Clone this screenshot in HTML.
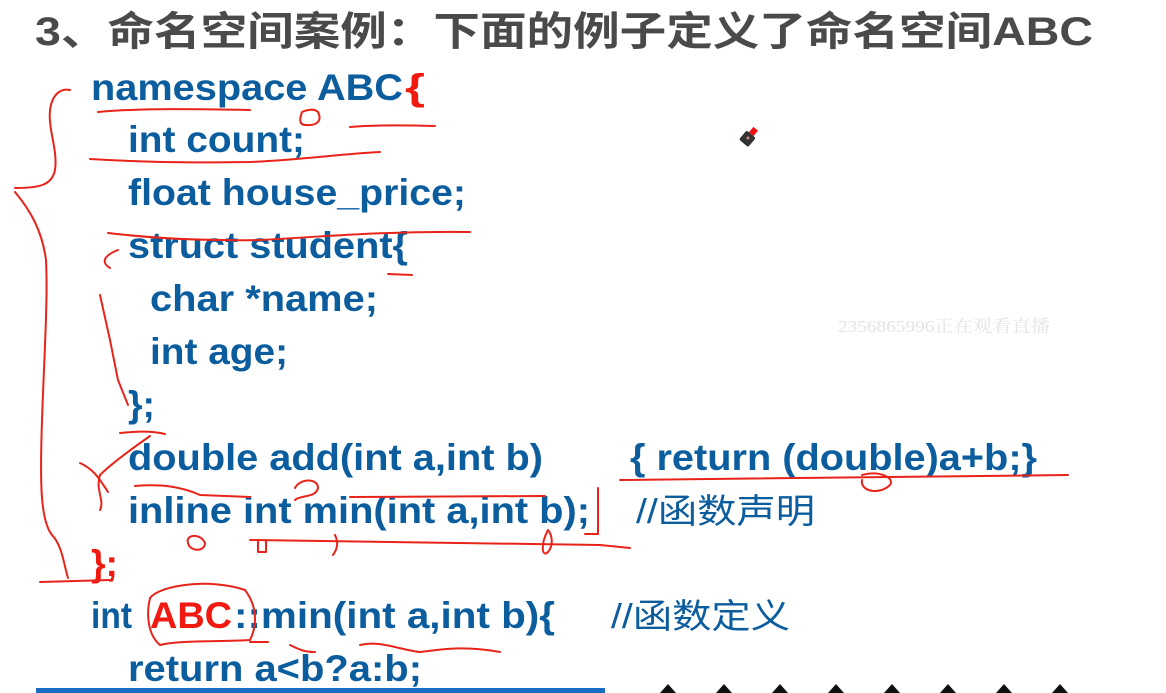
<!DOCTYPE html>
<html><head><meta charset="utf-8"><style>
html,body{margin:0;padding:0;background:#fff;width:1166px;height:693px;overflow:hidden}
svg{display:block}
.c{font-family:"Liberation Sans","Noto Sans CJK SC",sans-serif;font-weight:bold;font-size:37px;fill:#0b5d9e}
.r{fill:#f01a10}
.t{font-family:"Liberation Sans","Noto Sans CJK SC",sans-serif;font-weight:bold;font-size:40px;fill:#4a4a4a}
.cm{font-family:"Liberation Sans","Noto Sans CJK SC",sans-serif;font-size:34px;fill:#0b5d9e}
.a{fill:none;stroke:#e8231a;stroke-width:2;stroke-linecap:round;stroke-linejoin:round}
</style></head><body>
<svg width="1166" height="693" viewBox="0 0 1166 693">
<text class="t" x="35" y="45" textLength="1058" lengthAdjust="spacingAndGlyphs">3、命名空间案例：下面的例子定义了命名空间ABC</text>

<text class="c" x="91" y="100" textLength="312" lengthAdjust="spacingAndGlyphs">namespace ABC</text>
<text class="c r" x="405" y="100" textLength="20" lengthAdjust="spacingAndGlyphs">{</text>
<text class="c" x="128" y="152" textLength="177" lengthAdjust="spacingAndGlyphs">int count;</text>
<text class="c" x="128" y="205" textLength="338" lengthAdjust="spacingAndGlyphs">float house_price;</text>
<text class="c" x="128" y="258" textLength="280" lengthAdjust="spacingAndGlyphs">struct student{</text>
<text class="c" x="150" y="311" textLength="228" lengthAdjust="spacingAndGlyphs">char *name;</text>
<text class="c" x="150" y="364" textLength="138" lengthAdjust="spacingAndGlyphs">int age;</text>
<text class="c" x="128" y="417" textLength="27" lengthAdjust="spacingAndGlyphs">};</text>
<text class="c" x="128" y="470" textLength="415" lengthAdjust="spacingAndGlyphs">double add(int a,int b)</text>
<text class="c" x="630" y="470" textLength="407" lengthAdjust="spacingAndGlyphs">{ return (double)a+b;}</text>
<text class="c" x="128" y="523" textLength="462" lengthAdjust="spacingAndGlyphs">inline int min(int a,int b);</text>
<text class="cm" x="636" y="523" textLength="179" lengthAdjust="spacingAndGlyphs">//函数声明</text>
<text class="c r" x="91" y="576" textLength="27" lengthAdjust="spacingAndGlyphs">};</text>
<text class="c" x="91" y="628" textLength="41" lengthAdjust="spacingAndGlyphs">int</text>
<text class="c r" x="150" y="628" textLength="82" lengthAdjust="spacingAndGlyphs">ABC</text>
<text class="c" x="234" y="628" textLength="321" lengthAdjust="spacingAndGlyphs">::min(int a,int b){</text>
<text class="cm" x="611" y="628" textLength="179" lengthAdjust="spacingAndGlyphs">//函数定义</text>
<text class="c" x="128" y="681" textLength="294" lengthAdjust="spacingAndGlyphs">return a&lt;b?a:b;</text>

<text x="838" y="332" font-family="Liberation Serif,Noto Serif CJK SC,serif" font-size="17" fill="#e4e4e4" textLength="212" lengthAdjust="spacingAndGlyphs">2356865996正在观看直播</text>

<g transform="translate(748,138) rotate(40)">
<rect x="-3" y="-12" width="6" height="7" fill="#ee1111"/>
<rect x="-6" y="-5" width="12" height="12" rx="2" fill="#333"/>
<circle cx="0" cy="0" r="1.5" fill="#c88"/>
</g>

<path class="a" d="M70 90 C60 88 52 95 50 110 C48 130 58 150 55 170 C52 185 40 188 15 188"/>
<path class="a" d="M15 192 C30 210 42 230 46 260 C48 300 44 360 42 420 C40 480 40 520 52 535 C62 545 64 565 68 578"/>
<path class="a" d="M98 112 C140 108 200 109 250 110"/>
<path class="a" d="M302 112 C300 118 298 125 306 125 C318 126 322 120 318 112 C314 108 306 110 302 112"/>
<path class="a" d="M350 127 C370 125 400 125 435 126"/>
<path class="a" d="M90 159 C140 162 180 163 250 162 C300 160 340 154 380 152"/>
<path class="a" d="M108 233 C150 238 200 241 260 240 C320 237 380 231 470 232"/>
<path class="a" d="M118 250 C105 255 100 262 110 268"/>
<path class="a" d="M100 295 L110 340 L118 380 L128 405"/>
<path class="a" d="M388 274 L412 275"/>
<path class="a" d="M120 433 C130 432 150 430 165 434"/>
<path class="a" d="M80 463 C95 470 100 480 108 492"/>
<path class="a" d="M150 436 C130 450 110 465 100 475 C95 490 105 500 100 510"/>
<path class="a" d="M135 486 C160 484 180 486 200 495 L250 497"/>
<path class="a" d="M295 488 C300 478 318 478 318 488 C316 498 300 495 295 500"/>
<path class="a" d="M350 497 L545 496"/>
<path class="a" d="M620 480 L1068 475"/>
<path class="a" d="M862 475 C880 470 895 478 890 485 C880 495 860 492 862 480"/>
<path class="a" d="M598 488 L598 534 L585 534"/>
<path class="a" d="M188 543 C185 535 200 532 205 543 C205 552 190 552 188 543"/>
<path class="a" d="M250 540 L600 545 L630 548"/>
<path class="a" d="M258 540 L258 552 L266 552 L266 540"/>
<path class="a" d="M335 535 C340 545 335 552 333 555"/>
<path class="a" d="M548 530 C540 545 542 558 548 552 C554 545 552 535 548 530"/>
<path class="a" d="M40 582 L110 580"/>
<path class="a" d="M150 598 C160 585 210 578 245 590 C260 610 255 630 250 640 C220 642 180 640 160 645 C148 635 146 615 150 598"/>
<path class="a" d="M250 642 L268 642"/>
<path class="a" d="M290 645 C300 650 305 652 315 652"/>
<path class="a" d="M360 645 C380 640 400 650 420 652 C440 650 460 645 500 652"/>

<rect x="36" y="688" width="569" height="5" fill="#1a6cc4"/>
<g fill="#111">
<path d="M660 693 L668 684 L676 693Z"/><path d="M716 693 L724 684 L732 693Z"/><path d="M772 693 L780 684 L788 693Z"/>
<path d="M828 693 L836 684 L844 693Z"/><path d="M884 693 L892 684 L900 693Z"/><path d="M940 693 L948 684 L956 693Z"/>
<path d="M996 693 L1004 684 L1012 693Z"/><path d="M1052 693 L1060 684 L1068 693Z"/>
</g>
</svg>
</body></html>
